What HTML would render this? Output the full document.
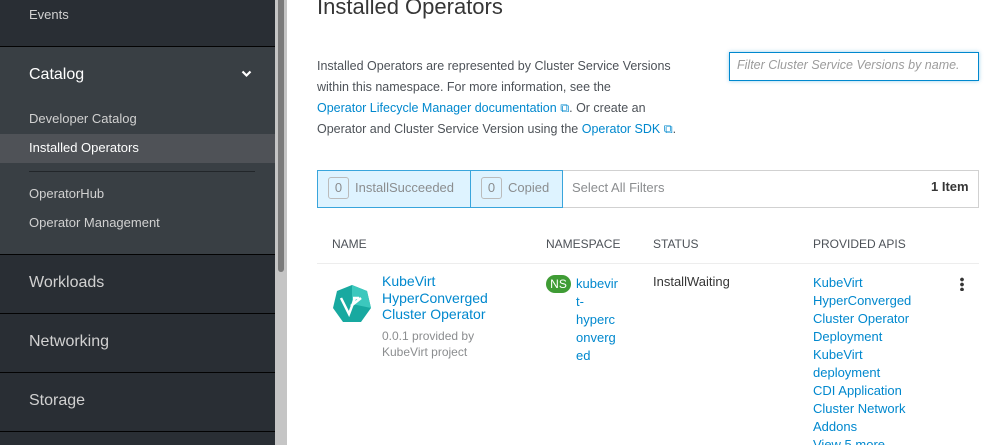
<!DOCTYPE html>
<html style="width:1007px;height:445px;overflow:hidden"><head><style>
*{margin:0;padding:0;box-sizing:border-box}
body{width:1007px;height:445px;overflow:hidden;background:#fff;font-family:"Liberation Sans",sans-serif;position:relative;font-size:13px;color:#363636}
.a{position:absolute;white-space:nowrap}
.sb{position:absolute;left:0;top:0;width:275px;height:445px;background:#292e34}
.sec{position:absolute;left:0;width:275px;background:#393f44;top:47px;height:207px}
.ln{position:absolute;left:0;width:275px;height:1px;background:#030303}
.nav{color:#d1d1d1;font-size:13px}
.big{color:#e0e0e0;font-size:16px}
a,.lk{color:#0088ce;text-decoration:none}
.g{color:#8b8d8f}
.hd{font-size:12px;color:#4d5258}
</style></head><body>
<div class="sb"></div>
<div class="sec"></div>
<div class="a" style="left:0;top:134px;width:275px;height:29px;background:#4f5257"></div>
<div class="ln" style="top:46px"></div>
<div class="ln" style="top:254px"></div>
<div class="ln" style="top:313px"></div>
<div class="ln" style="top:372px"></div>
<div class="ln" style="top:431px"></div>
<div class="a" style="left:29px;top:171px;width:226px;height:1px;background:#22262a"></div>
<div class="a nav" style="left:29px;top:7px">Events</div>
<div class="a" style="left:29px;top:66px;color:#fff;font-size:16px">Catalog</div>
<svg class="a" style="left:241px;top:70px" width="11" height="8" viewBox="0 0 11 8"><path d="M1.5 1.5L5.5 5.5L9.5 1.5" stroke="#fff" stroke-width="2.2" fill="none"/></svg>
<div class="a nav" style="left:29px;top:111px">Developer Catalog</div>
<div class="a" style="left:29px;top:140px;color:#fff;font-size:13px">Installed Operators</div>
<div class="a nav" style="left:29px;top:186px">OperatorHub</div>
<div class="a nav" style="left:29px;top:215px">Operator Management</div>
<div class="a big" style="left:29px;top:274px;color:#d1d1d1">Workloads</div>
<div class="a big" style="left:29px;top:333px;color:#d1d1d1">Networking</div>
<div class="a big" style="left:29px;top:392px;color:#d1d1d1">Storage</div>
<div class="a" style="left:275px;top:0;width:12px;height:445px;background:#c5c5c5"></div>
<div class="a" style="left:278px;top:0;width:6px;height:272px;background:#7b7b7b;border-radius:0 0 3px 3px"></div>

<div class="a" style="left:317px;top:-6px;font-size:22px;color:#363636">Installed Operators</div>
<div class="a" style="left:317px;top:56px;line-height:21px;color:#4d5258;font-size:12.5px">Installed Operators are represented by Cluster Service Versions<br>within this namespace. For more information, see the<br><span class="lk">Operator Lifecycle Manager documentation ⧉</span>. Or create an<br>Operator and Cluster Service Version using the <span class="lk">Operator SDK ⧉</span>.</div>
<div class="a" style="left:729px;top:52px;width:250px;height:29px;border:1px solid #0088ce;box-shadow:0 0 4px rgba(0,136,206,.4);padding:5px 7px;font-style:italic;color:#9c9c9c;font-size:12.5px;overflow:hidden">Filter Cluster Service Versions by name.</div>

<div class="a" style="left:317px;top:170px;width:662px;height:38px;border:1px solid #d1d1d1"></div>
<div class="a" style="left:317px;top:170px;width:154px;height:38px;border:1px solid #39a5dc;background:#def3ff"></div>
<div class="a" style="left:470px;top:170px;width:93px;height:38px;border:1px solid #39a5dc;background:#def3ff"></div>
<div class="a" style="left:328px;top:177px;width:21px;height:22px;border:1px solid #bbb;border-radius:3px;color:#8b8d8f;text-align:center;line-height:20px">0</div>
<div class="a g" style="left:355px;top:180px">InstallSucceeded</div>
<div class="a" style="left:481px;top:177px;width:21px;height:22px;border:1px solid #bbb;border-radius:3px;color:#8b8d8f;text-align:center;line-height:20px">0</div>
<div class="a g" style="left:508px;top:180px">Copied</div>
<div class="a g" style="left:572px;top:180px">Select All Filters</div>
<div class="a" style="left:931px;top:179px;font-weight:bold;color:#363636">1 Item</div>

<div class="a hd" style="left:332px;top:237px">NAME</div>
<div class="a hd" style="left:546px;top:237px">NAMESPACE</div>
<div class="a hd" style="left:653px;top:237px">STATUS</div>
<div class="a hd" style="left:813px;top:237px">PROVIDED APIS</div>
<div class="a" style="left:317px;top:263px;width:662px;height:1px;background:#ededed"></div>

<svg class="a" style="left:332px;top:284px" width="40" height="40" viewBox="0 0 40 40"><polygon points="20,1 35,7 39,24 29,38 11,38 1,24 5,7" fill="#18a9a0"/><polygon points="20,1 35,7 39,24 20,20" fill="#3cc8bd"/><path d="M9 14 L17 30 L23 14 M21 14 L27 14 M19 22 L29 14" stroke="#fff" stroke-width="2.5" fill="none"/></svg>
<div class="a lk" style="left:382px;top:273px;line-height:16.5px;font-size:14px">KubeVirt<br>HyperConverged<br>Cluster Operator</div>
<div class="a g" style="left:382px;top:328px;line-height:16px;font-size:12px">0.0.1 provided by<br>KubeVirt project</div>
<div class="a" style="left:546px;top:275px;width:25px;height:18px;border-radius:9px;background:#3f9c35;color:#fff;font-size:12px;text-align:center;line-height:18px">NS</div>
<div class="a lk" style="left:576px;top:275px;line-height:18px">kubevir<br>t-<br>hyperc<br>onverg<br>ed</div>
<div class="a" style="left:653px;top:274px">InstallWaiting</div>
<div class="a lk" style="left:813px;top:274px;line-height:18px">KubeVirt<br>HyperConverged<br>Cluster Operator<br>Deployment<br>KubeVirt<br>deployment<br>CDI Application<br>Cluster Network<br>Addons<br>View 5 more...</div>
<div class="a" style="left:960px;top:277px;width:4px;height:14px;background:radial-gradient(circle,#363636 1.7px,transparent 2px) 0 0/4px 5px"></div>
</body></html>
